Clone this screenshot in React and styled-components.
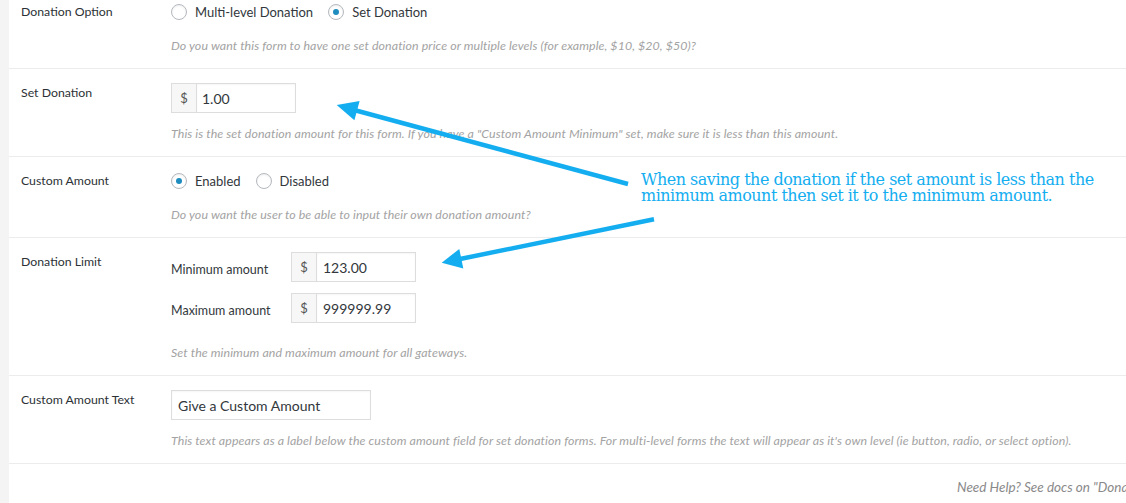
import React from "react";
import styled, { createGlobalStyle } from "styled-components";

const GlobalStyle = createGlobalStyle`
  html, body {
    margin: 0;
    padding: 0;
    background: #fff;
    overflow: hidden;
  }
  body {
    font-family: Lato, "Open Sans", sans-serif;
    color: #23282d;
  }
`;

const Page = styled.div`
  position: relative;
  display: flex;
  width: 1126px;
  height: 503px;
  overflow: hidden;
`;

const LeftEdge = styled.div`
  flex: 0 0 9px;
  background: #f4f4f4;
`;

const Panel = styled.div`
  flex: 1;
  margin-top: -12px;
  background: #fff;
`;

const Row = styled.div`
  display: flex;
  padding: 14px 0 13px 12px;
  border-bottom: 1px solid #ececec;
`;

const Label = styled.div`
  flex: 0 0 150px;
  margin-top: 1px;
  font-size: 12.3px;
  line-height: 18px;
  color: #2c3136;
`;

const Field = styled.div`
  display: flex;
  flex-direction: column;
  align-items: flex-start;
`;

const RadioList = styled.div`
  display: flex;
  align-items: center;
  height: 20px;
  gap: 15px;
`;

const RadioOption = styled.label`
  display: flex;
  align-items: center;
  gap: 8px;
  font-size: 13px;
  line-height: 20px;
  color: #32373c;
`;

const RadioDot = styled.span`
  position: relative;
  box-sizing: border-box;
  width: 16px;
  height: 16px;
  border: 1px solid #b4b9be;
  border-radius: 50%;
  background: #fff;
  box-shadow: inset 0 1px 2px rgba(0, 0, 0, 0.07);

  &::after {
    content: "";
    display: ${(p) => (p.$checked ? "block" : "none")};
    position: absolute;
    left: 4px;
    top: 4px;
    width: 6px;
    height: 6px;
    border-radius: 50%;
    background: #1e8cbe;
  }
`;

const Description = styled.p`
  margin: ${(p) => p.$gap}px 0 0;
  font-size: 12.4px;
  line-height: 18px;
  letter-spacing: 0.08px;
  font-style: italic;
  color: #a3a3a3;
  white-space: nowrap;
`;

const InputGroup = styled.div`
  display: flex;
  height: 30px;
`;

const Addon = styled.span`
  box-sizing: border-box;
  display: flex;
  align-items: center;
  justify-content: center;
  width: 25px;
  height: 30px;
  border: 1px solid #ddd;
  border-right: none;
  background: #f7f7f7;
  font-size: 13px;
  color: #555;
`;

const TextInput = styled.input`
  box-sizing: border-box;
  width: ${(p) => p.$width}px;
  height: 30px;
  margin: 0;
  padding: 0 ${(p) => p.$pad}px;
  border: 1px solid #ddd;
  border-radius: 0;
  outline: none;
  background: #fff;
  box-shadow: inset 0 1px 2px rgba(0, 0, 0, 0.04);
  font-family: Lato, "Open Sans", sans-serif;
  font-size: 14px;
  color: #32373c;
`;

const LimitList = styled.div`
  display: flex;
  flex-direction: column;
  gap: 11px;
  margin-bottom: 9px;
`;

const LimitRow = styled.div`
  display: flex;
  align-items: center;
`;

const SubLabel = styled.span`
  flex: 0 0 120px;
  padding-top: 6px;
  font-size: 12.5px;
  line-height: 18px;
  color: #32373c;
`;

const Footer = styled.div`
  padding: 14px 0 0 948px;
  font-size: 13.5px;
  line-height: 18px;
  font-style: italic;
  color: #8a8a8a;
  white-space: nowrap;
`;

const Overlay = styled.svg`
  position: absolute;
  left: 0;
  top: 0;
  pointer-events: none;
`;

const Note = styled.div`
  position: absolute;
  left: 641px;
  top: 172px;
  width: 485px;
  font-family: "Roboto Slab", "DejaVu Serif", serif;
  font-size: 16px;
  line-height: 16px;
  letter-spacing: -0.5px;
  color: #14aef0;
`;

function Radio({ checked, children }) {
  return (
    <RadioOption>
      <RadioDot $checked={checked} />
      {children}
    </RadioOption>
  );
}

function Money({ value, width = 100, pad = 5 }) {
  return (
    <InputGroup>
      <Addon>$</Addon>
      <TextInput $width={width} $pad={pad} defaultValue={value} readOnly />
    </InputGroup>
  );
}

const blue = "#14aef0";

export default function App() {
  return (
    <>
      <GlobalStyle />
      <Page>
        <LeftEdge />
        <Panel>
          <Row>
            <Label>Donation Option</Label>
            <Field>
              <RadioList>
                <Radio>Multi-level Donation</Radio>
                <Radio checked>Set Donation</Radio>
              </RadioList>
              <Description $gap={15}>
                Do you want this form to have one set donation price or multiple levels (for example, $10, $20, $50)?
              </Description>
            </Field>
          </Row>

          <Row>
            <Label>Set Donation</Label>
            <Field>
              <Money value="1.00" />
              <Description $gap={12}>
                This is the set donation amount for this form. If you have a "Custom Amount Minimum" set, make sure it is less than this amount.
              </Description>
            </Field>
          </Row>

          <Row>
            <Label>Custom Amount</Label>
            <Field>
              <RadioList>
                <Radio checked>Enabled</Radio>
                <Radio>Disabled</Radio>
              </RadioList>
              <Description $gap={15}>
                Do you want the user to be able to input their own donation amount?
              </Description>
            </Field>
          </Row>

          <Row>
            <Label>Donation Limit</Label>
            <Field>
              <LimitList>
                <LimitRow>
                  <SubLabel>Minimum amount</SubLabel>
                  <Money value="123.00" pad={6} />
                </LimitRow>
                <LimitRow>
                  <SubLabel>Maximum amount</SubLabel>
                  <Money value="999999.99" pad={6} />
                </LimitRow>
              </LimitList>
              <Description $gap={12}>Set the minimum and maximum amount for all gateways.</Description>
            </Field>
          </Row>

          <Row>
            <Label>Custom Amount Text</Label>
            <Field>
              <TextInput $width={200} $pad={6} defaultValue="Give a Custom Amount" readOnly />
              <Description $gap={12}>
                This text appears as a label below the custom amount field for set donation forms. For multi-level forms the text will appear as it's own level (ie button, radio, or select option).
              </Description>
            </Field>
          </Row>

          <Footer>Need Help? See docs on "Donation Options"</Footer>
        </Panel>

        <Overlay width="1126" height="503" viewBox="0 0 1126 503">
          <line x1="628" y1="184" x2="356" y2="110.5" stroke={blue} strokeWidth="4.5" />
          <polygon points="336.7,105 359.6,100.9 354.4,120.2" fill={blue} />
          <line x1="654" y1="219.3" x2="460" y2="259" stroke={blue} strokeWidth="4.5" />
          <polygon points="441.7,262.7 459.3,248.9 463.3,268.5" fill={blue} />
        </Overlay>
        <Note>
          When saving the donation if the set amount is less than the minimum amount then set it to the minimum amount.
        </Note>
      </Page>
    </>
  );
}
